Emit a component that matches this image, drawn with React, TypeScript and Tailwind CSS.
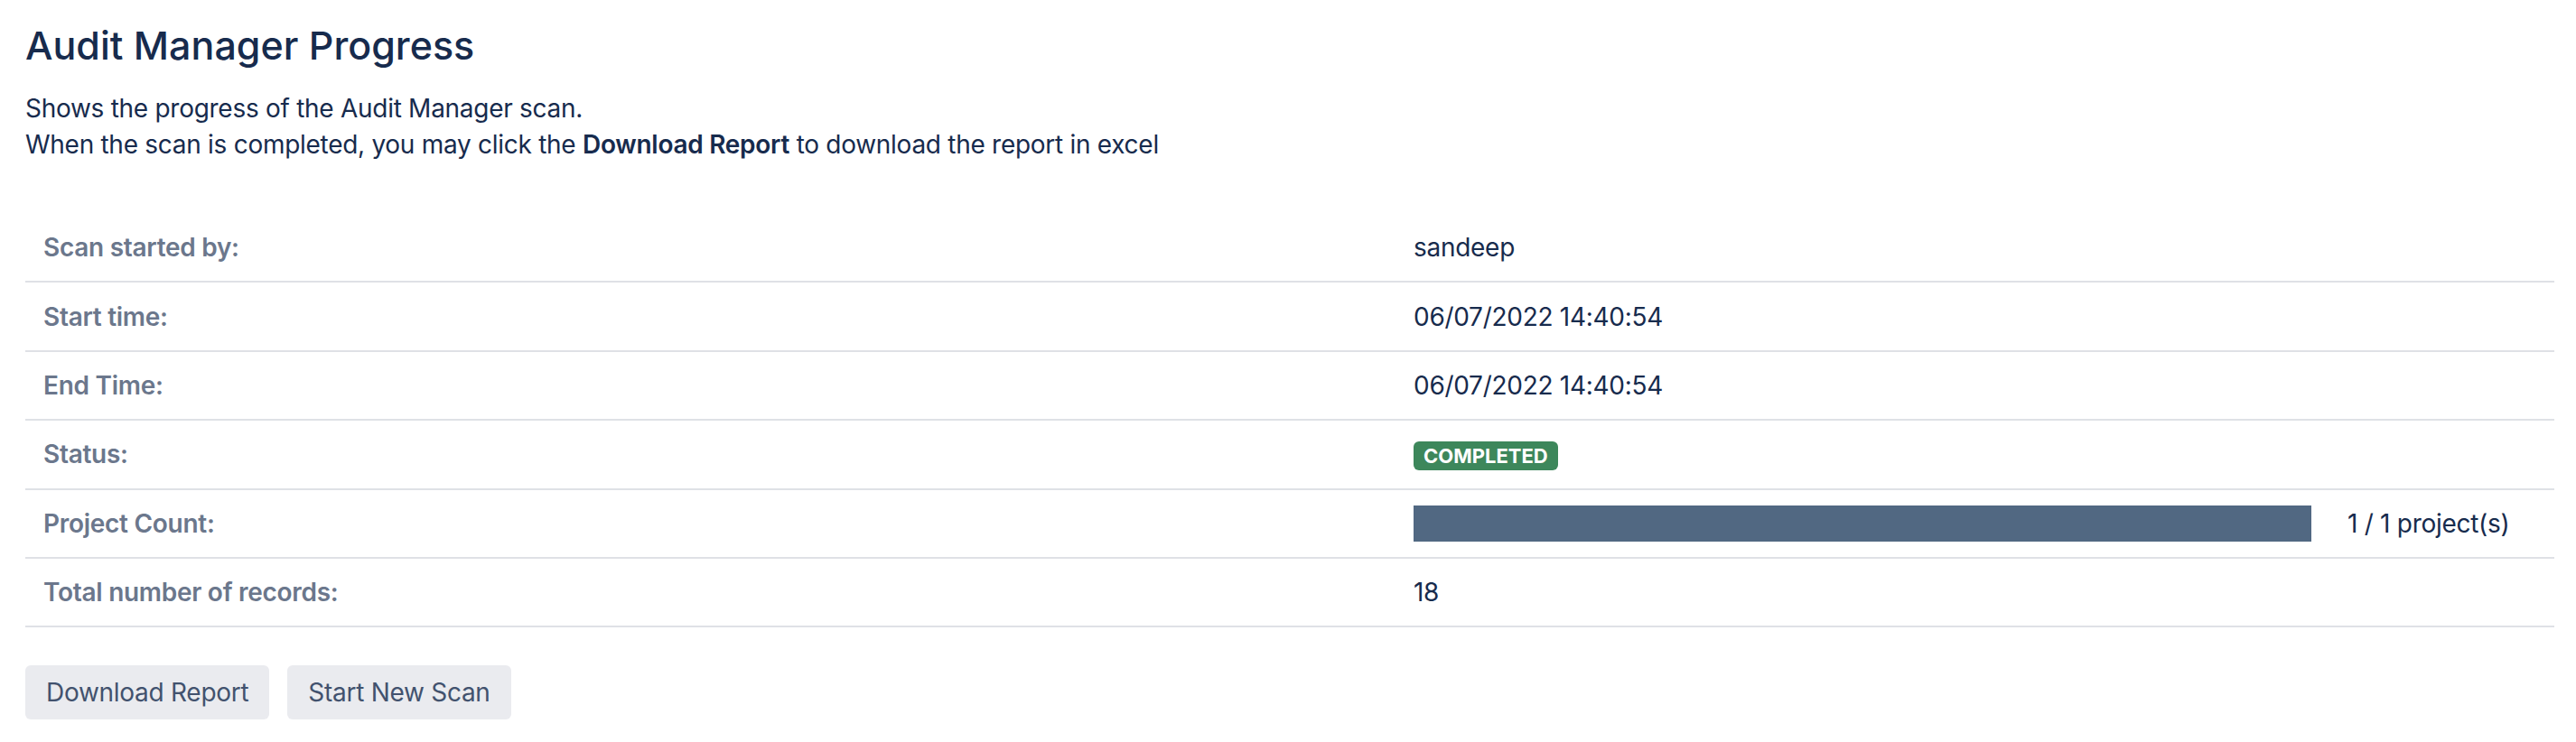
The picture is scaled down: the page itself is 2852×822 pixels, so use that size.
const rows: { label: string; value: React.ReactNode }[] = [
  { label: "Scan started by:", value: "sandeep" },
  { label: "Start time:", value: "06/07/2022 14:40:54" },
  { label: "End Time:", value: "06/07/2022 14:40:54" },
  {
    label: "Status:",
    value: (
      <span className="inline-flex h-[32px] items-center rounded-[6px] bg-[#3d875b] px-[11px] text-[22px] font-bold uppercase leading-none tracking-normal text-white">
        Completed
      </span>
    ),
  },
  {
    label: "Project Count:",
    value: (
      <div className="flex items-center">
        <div className="h-[40px] w-[994px] bg-[#516882]" />
        <span className="ml-[40px]">1 / 1 project(s)</span>
      </div>
    ),
  },
  { label: "Total number of records:", value: "18" },
];

export default function App() {
  return (
    <div className="min-h-screen bg-white pl-[28px] pr-[24px] pt-[22px] font-['Inter',sans-serif] text-[#172b4d]">
      <h1 className="text-[43px] font-medium leading-[56px]">
        Audit Manager Progress
      </h1>

      <div className="mt-[22px] text-[28px] leading-[40px] tracking-[-0.01em]">
        <p>Shows the progress of the Audit Manager scan.</p>
        <p>
          When the scan is completed, you may click the{" "}
          <b className="font-semibold">Download Report</b> to download the
          report in excel
        </p>
      </div>

      <div className="mt-[57px]">
        {rows.map((r) => (
          <div
            key={r.label}
            className="flex h-[76.4px] items-center border-b-2 border-[#dfe1e6] text-[28px] tracking-[-0.01em]"
          >
            <div className="w-[1517px] shrink-0 px-[20px] font-semibold text-[#6b778c]">
              {r.label}
            </div>
            <div className="flex-1 px-[20px]">{r.value}</div>
          </div>
        ))}
      </div>

      <div className="mt-[42px] flex gap-[20px]">
        <button className="h-[60px] rounded-[6px] bg-[#eaebef] px-[23px] text-[28px] tracking-[-0.01em] text-[#42526e]">
          Download Report
        </button>
        <button className="h-[60px] rounded-[6px] bg-[#eaebef] px-[23px] text-[28px] tracking-[-0.01em] text-[#42526e]">
          Start New Scan
        </button>
      </div>
    </div>
  );
}
